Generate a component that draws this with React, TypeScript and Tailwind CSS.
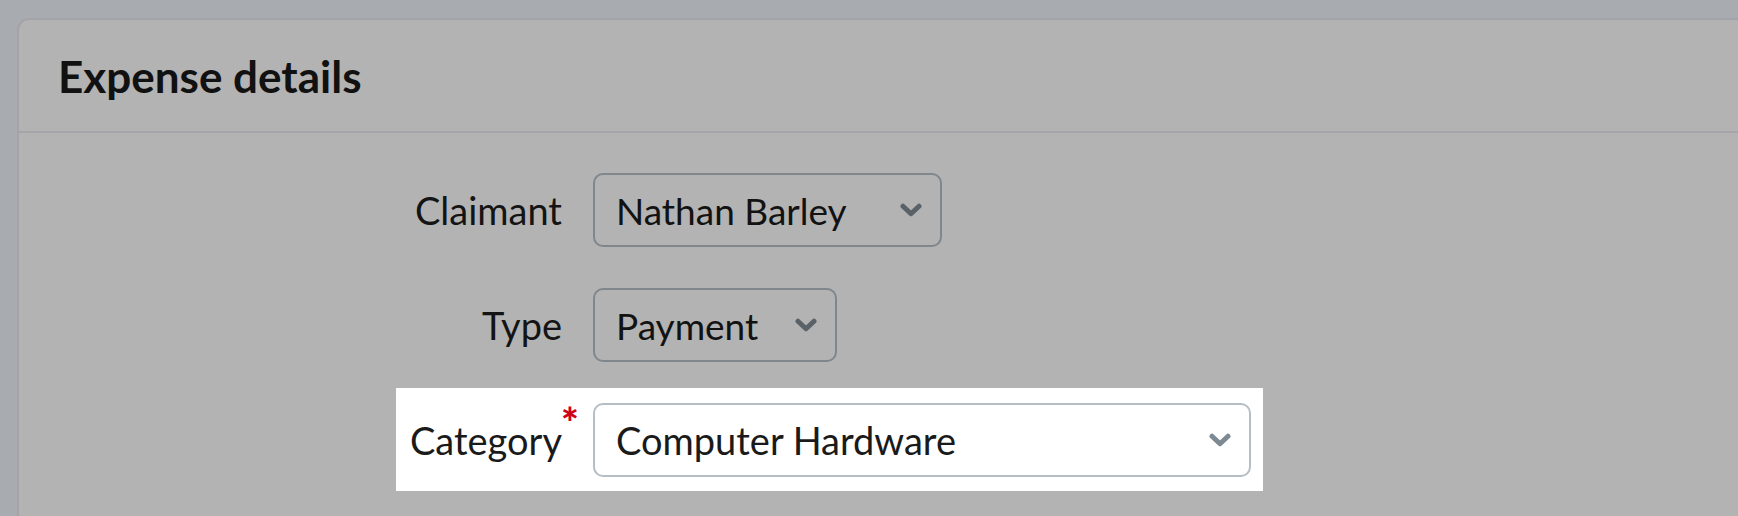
import React from "react";

// Chevron du select, trait épais
const Chevron = ({ color }: { color: string }) => (
  <svg width="22" height="14" viewBox="0 0 22 14" fill="none" className="shrink-0">
    <polyline
      points="3,3.2 11,10.8 19,3.2"
      stroke={color}
      strokeWidth="5"
      strokeLinecap="round"
      strokeLinejoin="round"
    />
  </svg>
);

type SelectProps = {
  value: string;
  width: string;
  highlighted?: boolean;
};

const FakeSelect = ({ value, width, highlighted }: SelectProps) => (
  <div
    className={`${width} h-[74px] flex items-center justify-between pl-[21px] pr-[18px] rounded-[10px] border-2 ${
      highlighted ? "border-[#b6bec5] bg-white" : "border-[#7f868c]"
    }`}
  >
    <span className={highlighted ? "text-[38px] text-[#1a1a1a]" : "text-[#121212]"}>{value}</span>
    <Chevron color={highlighted ? "#7d8a94" : "#5a6268"} />
  </div>
);

const App = () => {
  return (
    <div
      className="w-[1738px] h-[516px] overflow-hidden bg-[#a8abb0] pt-[18px] pl-[17px]"
      style={{ fontFamily: "Lato, 'Noto Sans', sans-serif" }}
    >
      <div className="h-[520px] border-2 border-r-0 border-b-0 border-[#a3a3a8] rounded-tl-[12px] bg-[#b3b3b3]">
        <div className="h-[113px] border-b-2 border-[#a4a4a9] flex items-center pl-[39px]">
          <h2 className="text-[44px] font-bold text-[#111111] leading-none">Expense details</h2>
        </div>

        <div className="pt-[40px] ml-[377px] flex flex-col gap-[41px] text-[37px] leading-none">
          <div className="flex w-fit items-center px-[12px]">
            <label className="w-[154px] text-right text-[38px] text-[#141414]">Claimant</label>
            <div className="ml-[31px]">
              <FakeSelect value="Nathan Barley" width="w-[349px]" />
            </div>
          </div>

          <div className="flex w-fit items-center px-[12px]">
            <label className="w-[154px] text-right text-[38px] text-[#141414]">Type</label>
            <div className="ml-[31px]">
              <FakeSelect value="Payment" width="w-[244px]" />
            </div>
          </div>

          <div className="flex w-fit items-center px-[12px] pt-[15px] pb-[14px] -mt-[15px] bg-white">
            <label className="relative w-[154px] text-right text-[38px] text-[#1a1a1a]">
              Category
              <span className="absolute left-full -ml-[1px] -top-[20px] text-[42px] font-black leading-none text-[#d0021b]">
                *
              </span>
            </label>
            <div className="ml-[31px]">
              <FakeSelect value="Computer Hardware" width="w-[658px]" highlighted />
            </div>
          </div>
        </div>
      </div>
    </div>
  );
};

export default App;
